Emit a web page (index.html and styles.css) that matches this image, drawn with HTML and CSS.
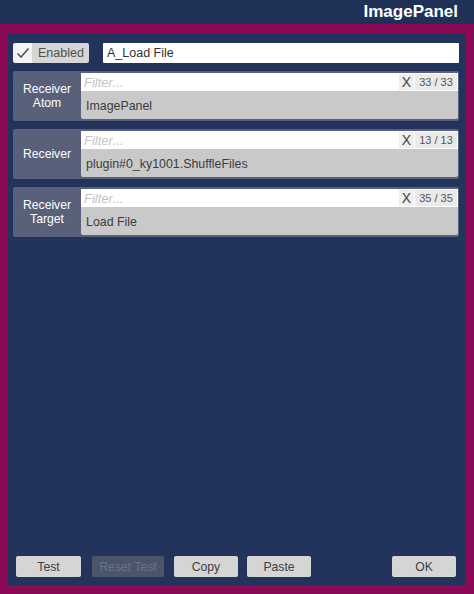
FILE: index.html
```html
<!DOCTYPE html>
<html>
<head>
<meta charset="utf-8">
<link rel="stylesheet" href="styles.css">
</head>
<body>
<div class="header"><span class="title">ImagePanel</span></div>
<div class="frame">
  <div class="panel">
    <div class="top-row">
      <div class="toggle">
        <span class="check"><svg width="14" height="12" viewBox="0 0 14 12"><path d="M1.5 6.5 L5 10 L12.5 1.5" fill="none" stroke="#555" stroke-width="1.6"/></svg></span>
        <span class="toggle-label">Enabled</span>
      </div>
      <div class="name-field">A_Load File</div>
    </div>
    <div class="chooser">
      <div class="chooser-label">Receiver<br>Atom</div>
      <div class="chooser-body">
        <div class="filter"><span class="ph">Filter...</span><span class="clear">X</span><span class="count">33 / 33</span></div>
        <div class="value">ImagePanel</div>
      </div>
    </div>
    <div class="chooser">
      <div class="chooser-label">Receiver</div>
      <div class="chooser-body">
        <div class="filter"><span class="ph">Filter...</span><span class="clear">X</span><span class="count">13 / 13</span></div>
        <div class="value">plugin#0_ky1001.ShuffleFiles</div>
      </div>
    </div>
    <div class="chooser">
      <div class="chooser-label">Receiver<br>Target</div>
      <div class="chooser-body">
        <div class="filter"><span class="ph">Filter...</span><span class="clear">X</span><span class="count">35 / 35</span></div>
        <div class="value">Load File</div>
      </div>
    </div>
    <div class="spacer"></div>
    <div class="buttons">
      <button class="btn w65">Test</button>
      <button class="btn disabled w72">Reset Test</button>
      <button class="btn w64">Copy</button>
      <button class="btn w64">Paste</button>
      <span class="grow"></span>
      <button class="btn w64">OK</button>
    </div>
  </div>
</div>
</body>
</html>
```
FILE: styles.css
```css
html, body {
  margin: 0;
  padding: 0;
}
body {
  width: 474px;
  height: 594px;
  background: #1f3157;
  font-family: "Liberation Sans", Arial, sans-serif;
  overflow: hidden;
}
.header {
  height: 24px;
  display: flex;
  justify-content: flex-end;
  align-items: center;
  padding-right: 16px;
  box-sizing: border-box;
}
.title {
  color: #ffffff;
  font-weight: bold;
  font-size: 17px;
  line-height: 24px;
}
.frame {
  background: #8b0a55;
  height: 570px;
  box-sizing: border-box;
  padding: 10px 9px 9px 8px;
}
.panel {
  background: #22345b;
  height: 100%;
  box-sizing: border-box;
  padding: 9px 6px 8px 5px;
  display: flex;
  flex-direction: column;
}
.top-row {
  display: flex;
  height: 20px;
  gap: 14px;
  margin-bottom: 8px;
}
.toggle {
  width: 76px;
  display: flex;
  border-radius: 2px;
  overflow: hidden;
}
.check {
  width: 19px;
  background: #f3f3f3;
  display: flex;
  align-items: center;
  justify-content: center;
}
.toggle-label {
  flex: 1;
  background: #d6d6d6;
  color: #505050;
  font-size: 12.5px;
  line-height: 20px;
  padding-left: 6px;
}
.name-field {
  flex: 1;
  background: #ffffff;
  color: #333;
  font-size: 12.5px;
  line-height: 20px;
  padding-left: 4px;
  border-radius: 1px;
}
.chooser {
  display: flex;
  height: 50px;
  width: 446px;
  background: #596079;
  border-radius: 2px;
  margin-bottom: 8px;
  box-sizing: border-box;
  padding: 2px 1px 2px 0;
}
.chooser-label {
  width: 68px;
  color: #ffffff;
  font-size: 12.2px;
  line-height: 14px;
  text-align: center;
  display: flex;
  align-items: center;
  justify-content: center;
}
.chooser-body {
  flex: 1;
  display: flex;
  flex-direction: column;
}
.filter {
  height: 18px;
  background: #ffffff;
  display: flex;
  align-items: center;
  padding-left: 3px;
}
.ph {
  flex: 1;
  color: #c4c4c4;
  font-style: italic;
  font-size: 13px;
}
.clear {
  width: 15px;
  height: 16px;
  background: #eeeeee;
  color: #444;
  font-size: 14px;
  line-height: 16px;
  text-align: center;
}
.count {
  width: 42px;
  height: 16px;
  margin: 0 1px 0 1px;
  background: #eaeaea;
  color: #555;
  font-size: 11px;
  line-height: 16px;
  text-align: center;
}
.value {
  flex: 1;
  background: #c9c9c9;
  color: #3c3c3c;
  font-size: 12.4px;
  display: flex;
  align-items: center;
  padding-left: 5px;
  padding-top: 1px;
  border-radius: 0 0 2px 2px;
}
.spacer {
  flex: 1;
}
.buttons {
  display: flex;
  height: 21px;
  padding-left: 3px;
  padding-right: 3px;
}
.btn {
  height: 21px;
  border: none;
  border-radius: 2px;
  background: #d5d5d5;
  color: #404040;
  font-family: "Liberation Sans", Arial, sans-serif;
  font-size: 12.2px;
  padding: 0;
  margin-right: 10px;
}
.btn.disabled {
  background: #4b5569;
  color: #68728a;
}
.w65 { width: 65px; margin-right: 11px; }
.w72 { width: 72px; }
.w64 { width: 64px; margin-right: 9px; }
.grow { flex: 1; }
.buttons .btn:last-child { margin-right: 0; }
```
